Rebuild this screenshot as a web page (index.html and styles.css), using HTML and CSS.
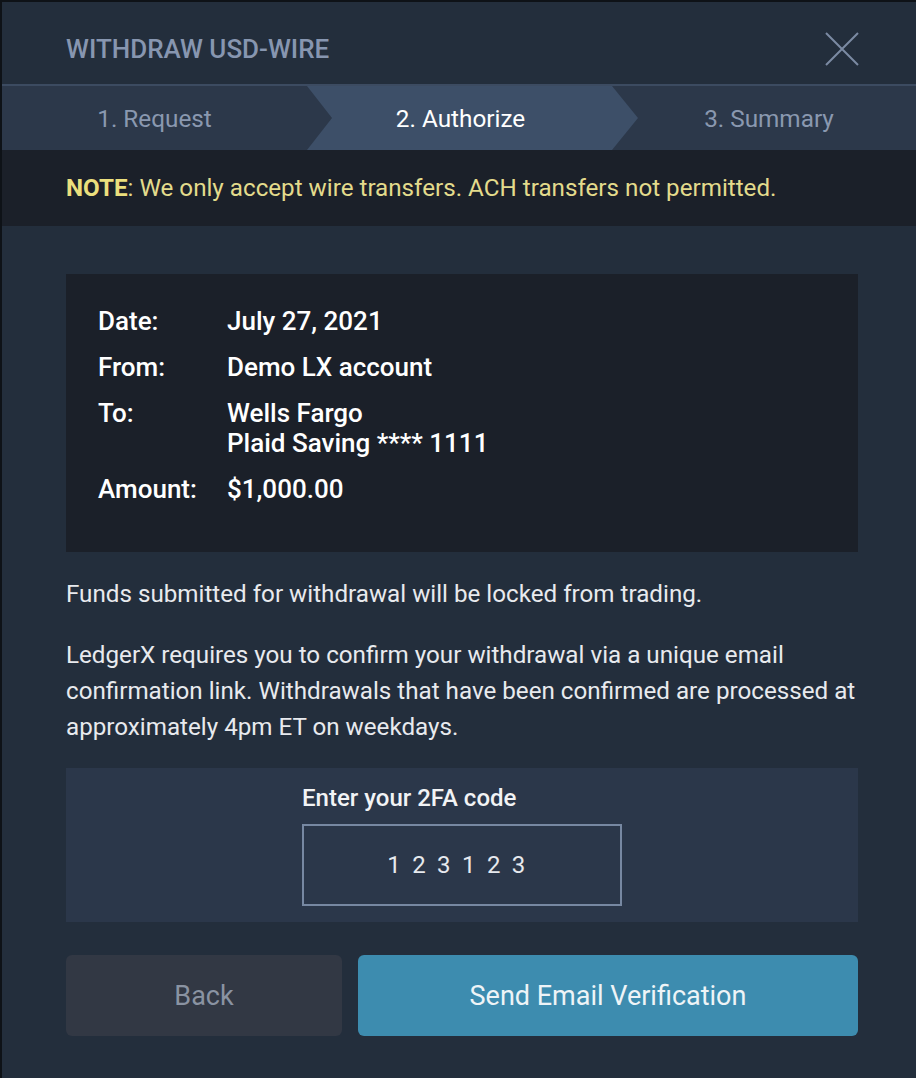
FILE: index.html
```html
<!DOCTYPE html>
<html lang="en">
<head>
<meta charset="utf-8">
<title>Withdraw USD-Wire</title>
<link rel="stylesheet" href="styles.css">
</head>
<body>
<div class="modal">
  <header class="modal-header">
    <h1 class="modal-title">WITHDRAW USD-WIRE</h1>
    <button class="close" aria-label="Close">
      <svg width="34" height="34" viewBox="0 0 34 34"><path d="M1 1 L33 33 M33 1 L1 33" stroke="#7b8aa3" stroke-width="2" fill="none"/></svg>
    </button>
  </header>
  <nav class="steps">
    <div class="step">1. Request</div>
    <div class="step active">2. Authorize</div>
    <div class="step last">3. Summary</div>
  </nav>
  <div class="note"><strong>NOTE</strong>: We only accept wire transfers. ACH transfers not permitted.</div>
  <main class="content">
    <section class="summary">
      <div class="row"><span class="label">Date:</span><span class="value">July 27, 2021</span></div>
      <div class="row"><span class="label">From:</span><span class="value">Demo LX account</span></div>
      <div class="row"><span class="label">To:</span><span class="value">Wells Fargo<br>Plaid Saving **** 1111</span></div>
      <div class="row"><span class="label">Amount:</span><span class="value">$1,000.00</span></div>
    </section>
    <p class="text">Funds submitted for withdrawal will be locked from trading.</p>
    <p class="text">LedgerX requires you to confirm your withdrawal via a unique email confirmation link. Withdrawals that have been confirmed are processed at approximately 4pm ET on weekdays.</p>
    <section class="twofa">
      <div class="twofa-inner">
        <label class="twofa-label">Enter your 2FA code</label>
        <div class="code-input">123123</div>
      </div>
    </section>
    <div class="actions">
      <button class="btn btn-back">Back</button>
      <button class="btn btn-send">Send Email Verification</button>
    </div>
  </main>
</div>
</body>
</html>
```
FILE: styles.css
```css
* { box-sizing: border-box; }
html, body { margin: 0; padding: 0; }
body {
  background: #0e1217;
  font-family: Roboto, "Noto Sans", "Liberation Sans", sans-serif;
  width: 916px;
  height: 1078px;
  overflow: hidden;
}
.modal {
  margin: 2px 0 0 2px;
  height: 1076px;
  background: #232e3c;
}
.modal-header {
  height: 82px;
  display: flex;
  align-items: center;
  justify-content: space-between;
  padding: 0 57px 0 64px;
}
.modal-title {
  margin: 0;
  font-size: 26px;
  font-weight: 500;
  color: #8796b0;
  padding-top: 12px;
}
.close {
  background: none;
  border: 0;
  padding: 0;
  width: 34px;
  height: 34px;
  margin-top: 12px;
  cursor: pointer;
}
.close svg { display: block; }
.steps {
  display: grid;
  grid-template-columns: 305px 305px 1fr;
  height: 66px;
  background: #2c384a;
  border-top: 2px solid #3c4b61;
}
.step {
  display: flex;
  align-items: center;
  justify-content: center;
  font-size: 24.3px;
  color: #8a98b0;
}
.step.active {
  background: #3d4f68;
  color: #ffffff;
  width: 331px;
  padding-left: 0;
  padding-right: 24px;
  clip-path: polygon(0 0, calc(100% - 26px) 0, 100% 50%, calc(100% - 26px) 100%, 0 100%, 25px 50%);
}
.step.last { padding-left: 10px; }
.note {
  height: 76px;
  background: #1b2029;
  display: flex;
  align-items: center;
  padding-left: 64px;
  font-size: 24.2px;
  color: #e3db8c;
}
.note strong {
  font-weight: 700;
  color: #ebdf7d;
  white-space: pre;
}
.content {
  padding: 48px 58px 0 64px;
}
.summary {
  background: #1b2029;
  height: 278px;
  padding: 32px 32px;
  display: flex;
  flex-direction: column;
  gap: 16px;
}
.row {
  display: flex;
  font-size: 26px;
  font-weight: 500;
  color: #ffffff;
  line-height: 30px;
}
.label { width: 129px; flex: none; }
.text {
  margin: 0;
  color: #e8eaee;
  font-size: 24.2px;
  line-height: 36px;
}
.summary + .text { margin-top: 24px; }
.text + .text { margin-top: 25px; }
.twofa {
  margin-top: 23px;
  background: #2b374a;
  height: 154px;
  display: flex;
  justify-content: center;
}
.twofa-inner {
  width: 320px;
  padding-top: 16px;
}
.twofa-label {
  display: block;
  color: #f2f3f5;
  font-size: 24px;
  line-height: 28px;
  font-weight: 500;
}
.code-input {
  margin-top: 12px;
  height: 82px;
  border: 2px solid #7788a2;
  display: flex;
  align-items: center;
  justify-content: center;
  color: #e6e9ee;
  font-size: 24px;
  letter-spacing: 11.4px;
  padding-left: 0;
}
.actions {
  margin-top: 33px;
  display: flex;
  gap: 16px;
}
.btn {
  height: 81px;
  border: 0;
  border-radius: 6px;
  font-family: inherit;
  font-size: 27px;
}
.btn-back {
  width: 276px;
  background: #323844;
  color: #8a93a2;
}
.btn-send {
  width: 500px;
  background: #3d8caf;
  color: #eef4f7;
}
```
